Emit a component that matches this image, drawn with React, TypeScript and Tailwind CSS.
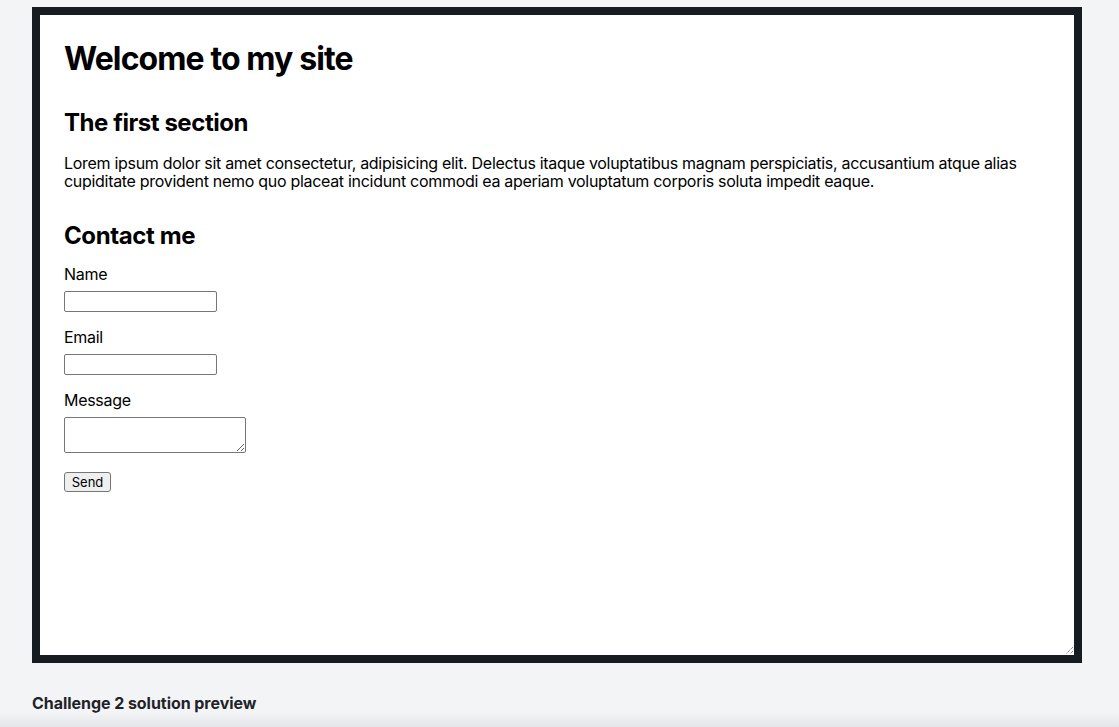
import React from 'react';

const font = { fontFamily: 'Inter, "Noto Sans", sans-serif' };

const ResizeGrip = () => (
  <svg className="absolute right-0 bottom-0" width="9" height="9" viewBox="0 0 9 9">
    <path d="M8 1 L1 8 M8 5 L5 8" stroke="#555" strokeWidth="1" strokeDasharray="1 1" fill="none" />
  </svg>
);

const App = () => {
  return (
    <div className="h-[727px] flex flex-col bg-[#f3f4f6] overflow-hidden" style={font}>
      <div className="px-8 pt-[7px]">
        {/* preview frame */}
        <div className="relative w-[1050px] h-[656px] border-8 border-[#171b22] bg-white">
          <div className="px-6 pt-[24px] text-black">
            <h1 className="text-[32px] leading-[39px] font-bold tracking-[-0.9px]">Welcome to my site</h1>

            <h2 className="mt-[30px] text-2xl leading-[29px] font-bold tracking-[-0.45px]">The first section</h2>
            <p className="mt-[17px] text-base leading-[18px] tracking-[-0.3px]">
              Lorem ipsum dolor sit amet consectetur, adipisicing elit. Delectus itaque voluptatibus magnam perspiciatis, accusantium atque alias cupiditate provident nemo quo placeat incidunt commodi ea aperiam voluptatum corporis soluta impedit eaque.
            </p>

            <h2 className="mt-[31px] text-2xl leading-[29px] font-bold tracking-[-0.4px]">Contact me</h2>
            <form className="flex flex-col items-start tracking-[-0.3px]" onSubmit={(e) => e.preventDefault()}>
              <label className="mt-[15px] text-base leading-[18px]">Name</label>
              <input type="text" className="mt-[8px] w-[153px] h-[21px] border border-[#767676] rounded-[2px] bg-white" />

              <label className="mt-[16px] text-base leading-[18px]">Email</label>
              <input type="email" className="mt-[8px] w-[153px] h-[21px] border border-[#767676] rounded-[2px] bg-white" />

              <label className="mt-[16px] text-base leading-[18px]">Message</label>
              <textarea className="mt-[8px] w-[182px] h-[36px] border border-[#767676] rounded-[2px] bg-white" />

              <button
                type="submit"
                className="mt-[19px] w-[47px] h-[20px] border border-[#767676] rounded-[3px] bg-[#efefef] text-[13px] leading-[16px] tracking-normal text-black"
              >
                Send
              </button>
            </form>
          </div>
          <ResizeGrip />
        </div>

        <p className="mt-[31px] text-base leading-[18px] font-bold tracking-[-0.05px] text-[#1f2328]">Challenge 2 solution preview</p>
      </div>

      <div className="mt-auto h-[14px] bg-gradient-to-b from-transparent to-[#e4e5e8]" />
    </div>
  );
};

export default App;
